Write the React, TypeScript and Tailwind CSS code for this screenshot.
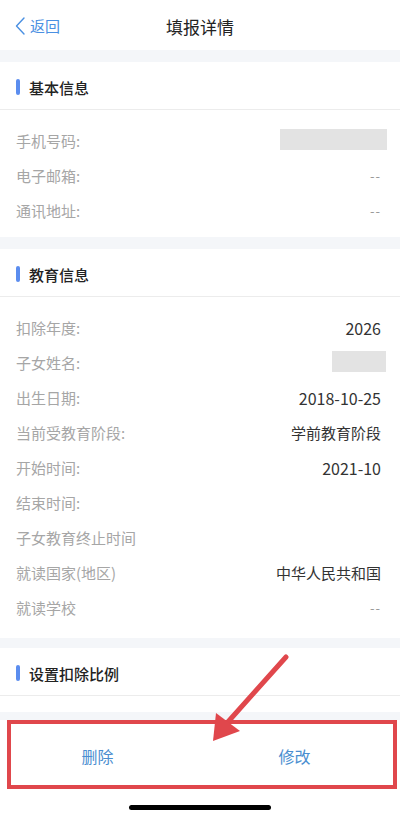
import React from 'react';

type Row = { label: string; value?: string; num?: boolean; mask?: 'phone' | 'name'; dash?: boolean };

const basic: Row[] = [
  { label: '手机号码:', mask: 'phone' },
  { label: '电子邮箱:', dash: true },
  { label: '通讯地址:', dash: true },
];

const edu: Row[] = [
  { label: '扣除年度:', value: '2026', num: true },
  { label: '子女姓名:', mask: 'name' },
  { label: '出生日期:', value: '2018-10-25', num: true },
  { label: '当前受教育阶段:', value: '学前教育阶段' },
  { label: '开始时间:', value: '2021-10', num: true },
  { label: '结束时间:' },
  { label: '子女教育终止时间' },
  { label: '就读国家(地区)', value: '中华人民共和国' },
  { label: '就读学校', dash: true },
];

function SectionTitle({ title }: { title: string }) {
  return (
    <div className="h-12 flex items-center px-4 border-b border-[#ececec]">
      <span className="w-[4px] h-4 rounded-sm bg-[#5b8def] mt-[2px]" />
      <span className="ml-[9px] text-[15px] leading-none font-medium text-[#222] mt-[3px]">{title}</span>
    </div>
  );
}

function InfoRow({ row }: { row: Row }) {
  return (
    <div className="h-[35px] flex items-center justify-between pl-4 pr-[19px]">
      <span className="text-[15px] leading-none text-[#a6a6a6] mt-[2px]">{row.label}</span>
      {row.mask === 'phone' && <span className="w-[107px] h-[21px] bg-[#e3e3e3] -mr-[6px]" />}
      {row.mask === 'name' && <span className="w-[54px] h-[21px] bg-[#e3e3e3] -mr-[5px]" />}
      {row.value && (
        <span className={row.num ? 'text-[16px] leading-none text-[#333] mt-[2px]' : 'text-[15px] leading-none text-[#333] mt-[2px]'}>
          {row.value}
        </span>
      )}
      {row.dash && <span className="text-[13px] leading-none text-[#999] tracking-[1px] mt-[2px]">--</span>}
    </div>
  );
}

export default function App() {
  return (
    <div
      className="relative w-[400px] h-[821px] bg-white overflow-hidden flex flex-col"
      style={{ fontFamily: '"Noto Sans CJK SC", "Noto Sans", sans-serif' }}
    >
      {/* Nav bar */}
      <div className="relative h-[50px] flex items-center justify-center shrink-0">
        <div className="absolute left-[15px] top-[17px] flex items-center text-[#4a90e2]">
          <svg width="10" height="18" viewBox="0 0 10 18" fill="none">
            <polyline points="9,1 1.5,9 9,17" stroke="#4a90e2" strokeWidth="1.4" strokeLinecap="round" strokeLinejoin="round" />
          </svg>
          <span className="ml-[5px] text-[15px] leading-[18px]">返回</span>
        </div>
        <span className="text-[17px] leading-none text-[#222] mt-[2px]">填报详情</span>
      </div>

      <div className="h-3 bg-[#f4f6f9] shrink-0" />

      <div className="shrink-0">
        <SectionTitle title="基本信息" />
        <div className="pt-3 pb-[10px]">
          {basic.map((r) => (
            <InfoRow key={r.label} row={r} />
          ))}
        </div>
      </div>

      <div className="h-3 bg-[#f4f6f9] shrink-0" />

      <div className="shrink-0">
        <SectionTitle title="教育信息" />
        <div className="pt-3 pb-[14px]">
          {edu.map((r) => (
            <InfoRow key={r.label} row={r} />
          ))}
        </div>
      </div>

      <div className="h-[10px] bg-[#f4f6f9] shrink-0" />

      <div className="shrink-0">
        <SectionTitle title="设置扣除比例" />
        <div className="h-4" />
      </div>

      <div className="h-2 bg-[#f4f6f9] shrink-0" />

      {/* Bottom actions */}
      <div className="h-[69px] ml-[7px] mr-[3px] border-4 border-[#e0474c] flex shrink-0">
        <button className="flex-1 text-[16px] leading-none text-[#4a8ed0] -ml-[12px] mt-[2px]">删除</button>
        <button className="flex-1 text-[16px] leading-none text-[#4a8ed0] mt-[2px]">修改</button>
      </div>

      <div className="flex-1 flex justify-center pt-4">
        <span className="w-[142px] h-[5px] rounded-full bg-black" />
      </div>

      {/* annotation arrow */}
      <svg className="absolute inset-0 pointer-events-none" width="400" height="821" viewBox="0 0 400 821">
        <line x1="286" y1="657" x2="227" y2="723" stroke="#e0474c" strokeWidth="5" strokeLinecap="round" />
        <polygon points="213,741 216,713 240,731" fill="#e0474c" />
      </svg>
    </div>
  );
}
